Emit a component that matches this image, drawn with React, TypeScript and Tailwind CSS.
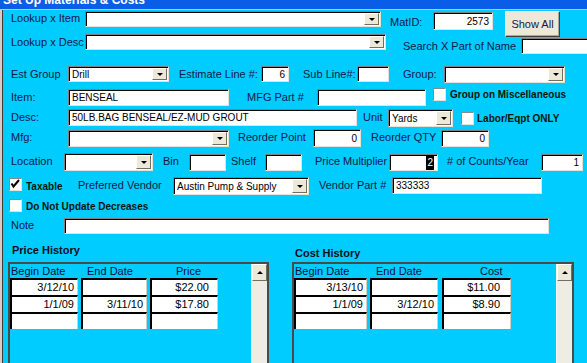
import React from "react";

type FieldProps = {
  className?: string;
  value?: string;
  right?: boolean;
  selected?: boolean;
};

const Field = ({ className = "", value = "", right, selected }: FieldProps) => (
  <div
    className={`shrink-0 flex items-center overflow-hidden whitespace-nowrap bg-white text-[10px] text-black border border-t-[#7f7f7f] border-l-[#7f7f7f] border-r-[#e6e3d6] border-b-[#e6e3d6] shadow-[inset_1px_1px_0_#000] ${
      right ? "justify-end pr-[3px]" : "pl-[3px]"
    } ${className}`}
  >
    {selected ? <span className="bg-black text-white px-[1px]">{value}</span> : value}
  </div>
);

const DropButton = () => (
  <div className="w-[15px] shrink-0 flex items-center justify-center bg-[#ece9d8] border border-t-white border-l-white border-r-[#716f64] border-b-[#716f64]">
    <span className="w-0 h-0 border-l-[3px] border-r-[3px] border-t-[3px] border-l-transparent border-r-transparent border-t-black" />
  </div>
);

const Combo = ({ className = "", value = "" }: { className?: string; value?: string }) => (
  <div
    className={`shrink-0 flex items-stretch py-[1px] pr-[1px] overflow-hidden whitespace-nowrap bg-white text-[10px] text-black border border-t-[#7f7f7f] border-l-[#7f7f7f] border-r-[#e6e3d6] border-b-[#e6e3d6] shadow-[inset_1px_1px_0_#000] ${className}`}
  >
    <span className="flex-1 pl-[3px] flex items-center">{value}</span>
    <DropButton />
  </div>
);

const Label = ({ className = "", children }: { className?: string; children: React.ReactNode }) => (
  <span className={`shrink-0 whitespace-nowrap leading-[13px] ${className}`}>{children}</span>
);

const Bold = ({ className = "", children }: { className?: string; children: React.ReactNode }) => (
  <span className={`shrink-0 whitespace-nowrap leading-[13px] font-bold text-[10px] text-[#0a140a] ${className}`}>
    {children}
  </span>
);

const Check = ({ className = "", checked }: { className?: string; checked?: boolean }) => (
  <div
    className={`shrink-0 w-[13px] h-[13px] bg-white border border-t-[#8a8a8a] border-l-[#8a8a8a] border-r-[#e6e3d6] border-b-[#e6e3d6] ${className}`}
  >
    {checked && (
      <svg width="11" height="11" viewBox="0 0 11 11">
        <polyline points="1.5,4.5 3.5,7.5 9,1" fill="none" stroke="#000" strokeWidth="2" />
      </svg>
    )}
  </div>
);

type HistoryProps = {
  title: string;
  titleClass: string;
  boxClass: string;
  heads: { text: string; cls: string }[];
  cols: string[];
  gaps: string[];
  rows: string[][];
  lastPad: string;
};

const History = ({ title, titleClass, boxClass, heads, cols, gaps, rows, lastPad }: HistoryProps) => (
  <div className="shrink-0">
    <div className={`font-bold text-[11px] leading-[13px] text-[#0d0d24] ${titleClass}`}>{title}</div>
    <div className={`h-[120px] border-2 border-[#4a4a4a] flex ${boxClass}`}>
      <div className="flex-1">
        <div className="flex h-[14px] items-center leading-[13px] text-[#0d0d3a]">
          {heads.map((h, i) => (
            <div key={i} className={`shrink-0 ${cols[i]} ${gaps[i]} ${h.cls}`}>
              {h.text}
            </div>
          ))}
        </div>
        {[0, 1, 2].map((r) => (
          <div key={r} className="flex">
            {cols.map((c, i) => (
              <div
                key={i}
                className={`shrink-0 h-[17px] flex items-center justify-end bg-white text-black border-t-2 border-l-2 border-t-black border-l-black border-r border-r-[#d4d0c8] ${c} ${gaps[i]} ${
                  i === 2 ? lastPad : "pr-[3px]"
                }`}
              >
                {rows[r] ? rows[r][i] : ""}
              </div>
            ))}
          </div>
        ))}
      </div>
      <div className="w-[16px] shrink-0 bg-[#efede3] flex flex-col border-l border-l-[#f7f6f0]">
        <div className="h-[17px] flex items-center justify-center bg-[#ece9d8] border border-t-white border-l-white border-r-[#716f64] border-b-[#716f64]">
          <span className="w-0 h-0 border-l-[3px] border-r-[3px] border-b-[3px] border-l-transparent border-r-transparent border-b-black" />
        </div>
      </div>
    </div>
  </div>
);

export default function App() {
  return (
    <div className="w-[587px] h-[363px] overflow-hidden bg-[#00ccff] font-['Liberation_Sans',Arial,sans-serif] text-[11px] text-[#16164a]">
      {/* window title, mostly scrolled off */}
      <div className="h-[9px] overflow-hidden bg-[#0a5de6]">
        <div className="-mt-[7px] pl-[3px] font-bold text-[12px] leading-[14px] text-white">Set Up Materials &amp; Costs</div>
      </div>
      <div className="h-[1px] bg-[#c9c6bb]" />

      <div className="flex h-[353px]">
        <div className="w-[2px] bg-[#d4d0c8]" />
        <div className="w-[1px] bg-[#3c3c3c]" />
        <div className="flex-1 overflow-hidden">
          {/* lookup item */}
          <div className="flex items-start h-[24px]">
            <Label className="ml-[8px] w-[72px] mt-[2px]">Lookup x Item</Label>
            <Combo className="ml-[2px] w-[296px] h-[16px] mt-[1px]" />
            <Label className="ml-[9px] w-[40px] mt-[6px]">MatID:</Label>
            <Field className="ml-[3px] w-[60px] h-[18px] mt-[2px]" value="2573" right />
            <div className="ml-[12px] w-[55px] h-[26px] mt-[1px] shrink-0 flex items-center justify-center bg-[#ece9d8] border border-t-white border-l-white border-r-[#404040] border-b-[#404040] shadow-[inset_-1px_-1px_0_#aca899]">
              Show All
            </div>
          </div>
          {/* lookup desc */}
          <div className="flex items-start h-[24px]">
            <Label className="ml-[8px] w-[72px] mt-[2px]">Lookup x Desc</Label>
            <Combo className="ml-[2px] w-[301px] h-[16px]" />
            <Label className="ml-[17px] w-[112px] mt-[6px]">Search X Part of Name</Label>
            <Field className="ml-[6px] w-[80px] h-[16px] mt-[4px]" />
          </div>
          {/* est group */}
          <div className="flex items-start h-[28px]">
            <Label className="ml-[8px] w-[55px] mt-[10px]">Est Group</Label>
            <Combo className="ml-[2px] w-[101px] h-[16px] mt-[8px]" value="Drill" />
            <Label className="ml-[10px] w-[80px] mt-[10px]">Estimate Line #:</Label>
            <Field className="ml-[2px] w-[28px] h-[16px] mt-[8px]" value="6" right />
            <Label className="ml-[14px] w-[53px] mt-[10px]">Sub Line#:</Label>
            <Field className="ml-[1px] w-[32px] h-[16px] mt-[8px]" />
            <Label className="ml-[14px] w-[38px] mt-[10px]">Group:</Label>
            <Combo className="ml-[3px] w-[121px] h-[17px] mt-[8px]" />
          </div>
          {/* item */}
          <div className="flex items-start h-[21px]">
            <Label className="ml-[8px] w-[55px] mt-[5px]">Item:</Label>
            <Field className="ml-[2px] w-[161px] h-[17px] mt-[3px]" value="BENSEAL" />
            <Label className="ml-[18px] w-[68px] mt-[5px]">MFG Part #</Label>
            <Field className="ml-[2px] w-[109px] h-[17px] mt-[3px]" />
            <Check className="ml-[7px] mt-[2px]" />
            <Bold className="ml-[4px] mt-[2px]">Group on Miscellaneous</Bold>
          </div>
          {/* desc */}
          <div className="flex items-start h-[21px]">
            <Label className="ml-[8px] w-[55px] mt-[4px]">Desc:</Label>
            <Field className="ml-[2px] w-[289px] h-[17px] mt-[2px]" value="50LB.BAG BENSEAL/EZ-MUD GROUT" />
            <Label className="ml-[6px] w-[23px] mt-[4px]">Unit</Label>
            <Combo className="ml-[2px] w-[65px] h-[18px] mt-[2px]" value="Yards" />
            <Check className="ml-[8px] mt-[5px]" />
            <Bold className="ml-[3px] mt-[5px]">Labor/Eqpt ONLY</Bold>
          </div>
          {/* mfg */}
          <div className="flex items-start h-[22px]">
            <Label className="ml-[8px] w-[55px] mt-[3px]">Mfg:</Label>
            <Combo className="ml-[2px] w-[161px] h-[17px] mt-[2px]" />
            <Label className="ml-[9px] w-[72px] mt-[3px]">Reorder Point</Label>
            <Field className="ml-[3px] w-[48px] h-[18px] mt-[1px]" value="0" right />
            <Label className="ml-[10px] w-[68px] mt-[3px]">Reorder QTY</Label>
            <Field className="ml-[2px] w-[48px] h-[17px] mt-[2px]" value="0" right />
          </div>
          {/* location */}
          <div className="flex items-start h-[24px]">
            <Label className="ml-[8px] w-[51px] mt-[5px]">Location</Label>
            <Combo className="ml-[2px] w-[89px] h-[18px] mt-[3px]" />
            <Label className="ml-[10px] w-[24px] mt-[5px]">Bin</Label>
            <Field className="ml-[2px] w-[37px] h-[17px] mt-[4px]" />
            <Label className="ml-[5px] w-[32px] mt-[5px]">Shelf</Label>
            <Field className="ml-[2px] w-[37px] h-[17px] mt-[4px]" />
            <Label className="ml-[13px] w-[72px] mt-[5px]">Price Multiplier</Label>
            <Field className="ml-[2px] w-[49px] h-[17px] mt-[4px]" value="2" right selected />
            <Label className="ml-[9px] w-[92px] mt-[5px]">
              # of Counts/Year
            </Label>
            <Field className="ml-[2px] w-[42px] h-[17px] mt-[4px]" value="1" right />
          </div>
          {/* taxable / vendor */}
          <div className="flex items-start h-[22px]">
            <Check className="ml-[6px] mt-[4px]" checked />
            <Bold className="ml-[4px] mt-[6px] w-[48px]">Taxable</Bold>
            <Label className="ml-[4px] w-[93px] mt-[5px]">Preferred Vendor</Label>
            <Combo className="ml-[2px] w-[136px] h-[18px] mt-[3px]" value="Austin Pump & Supply" />
            <Label className="ml-[10px] w-[71px] mt-[5px]">Vendor Part #</Label>
            <Field className="ml-[2px] w-[150px] h-[17px] mt-[3px]" value="333333" />
          </div>
          {/* do not update */}
          <div className="flex items-start h-[18px]">
            <Check className="ml-[6px] mt-[3px]" />
            <Bold className="ml-[4px] mt-[4px]">Do Not Update Decreases</Bold>
          </div>
          {/* note */}
          <div className="flex items-start h-[22px]">
            <Label className="ml-[8px] w-[51px] mt-[5px]">Note</Label>
            <Field className="ml-[2px] w-[485px] h-[16px] mt-[4px]" />
          </div>

          {/* histories */}
          <div className="flex items-start">
            <div className="ml-[5px] w-[261px] shrink-0">
              <History
                title="Price History"
                titleClass="mt-[8px] ml-[4px]"
                boxClass="mt-[5px]"
                heads={[
                  { text: "Begin Date", cls: "pl-[1px]" },
                  { text: "End Date", cls: "pl-[6px]" },
                  { text: "Price", cls: "pl-[26px]" },
                ]}
                cols={["w-[68px]", "w-[66px]", "w-[68px]"]}
                gaps={["ml-0", "ml-[3px]", "ml-[3px]"]}
                rows={[
                  ["3/12/10", "", "$22.00"],
                  ["1/1/09", "3/11/10", "$17.80"],
                ]}
                lastPad="pr-[8px]"
              />
            </div>
            <div className="ml-[23px] w-[282px] shrink-0">
              <History
                title="Cost History"
                titleClass="mt-[11px] ml-[3px]"
                boxClass="mt-[2px]"
                heads={[
                  { text: "Begin Date", cls: "pl-[1px]" },
                  { text: "End Date", cls: "pl-[6px]" },
                  { text: "Cost", cls: "pl-[38px]" },
                ]}
                cols={["w-[73px]", "w-[68px]", "w-[69px]"]}
                gaps={["ml-0", "ml-[3px]", "ml-[4px]"]}
                rows={[
                  ["3/13/10", "", "$11.00"],
                  ["1/1/09", "3/12/10", "$8.90"],
                ]}
                lastPad="pr-[10px]"
              />
            </div>
          </div>
        </div>
      </div>
    </div>
  );
}
